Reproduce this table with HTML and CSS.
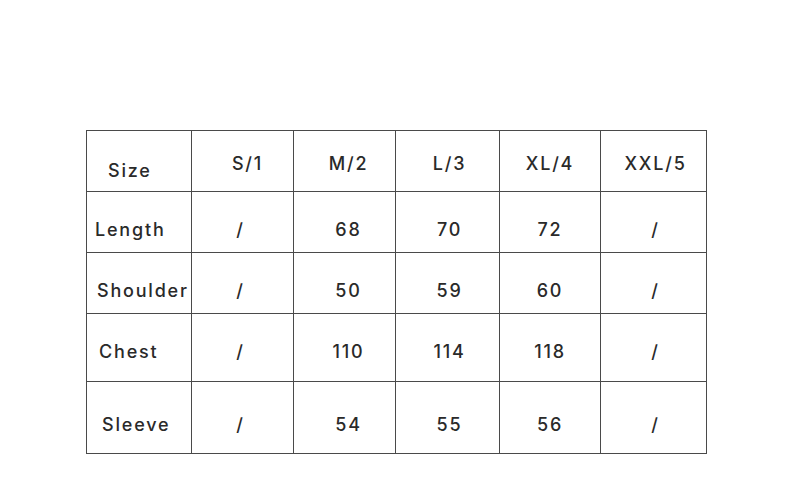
FILE: index.html
```html
<!DOCTYPE html>
<html>
<head>
<meta charset="utf-8">
<link rel="stylesheet" href="styles.css">
</head>
<body>
<div class="page">
  <table class="sizes">
    <colgroup>
      <col class="c1"><col class="c2"><col class="c3"><col class="c4"><col class="c5"><col class="c6">
    </colgroup>
    <tr class="r-head">
      <td class="label label-size">Size</td><td class="up">S/1</td><td class="up">M/2</td><td class="up">L/3</td><td class="up">XL/4</td><td class="up">XXL/5</td>
    </tr>
    <tr class="r-len">
      <td class="label">Length</td><td>/</td><td>68</td><td>70</td><td>72</td><td>/</td>
    </tr>
    <tr class="r-sh">
      <td class="label label-sh">Shoulder</td><td>/</td><td>50</td><td>59</td><td>60</td><td>/</td>
    </tr>
    <tr class="r-ch">
      <td class="label label-ch">Chest</td><td>/</td><td>110</td><td>114</td><td>118</td><td>/</td>
    </tr>
    <tr class="r-sl">
      <td class="label label-sl">Sleeve</td><td>/</td><td>54</td><td>55</td><td>56</td><td>/</td>
    </tr>
  </table>
</div>
</body>
</html>
```

FILE: styles.css
```css
html, body {
  margin: 0;
  padding: 0;
  background: #ffffff;
}
.page {
  width: 790px;
  height: 478px;
  padding: 130px 0 0 86px;
  box-sizing: border-box;
}
.sizes {
  border-collapse: collapse;
  table-layout: fixed;
  width: 621px;
  font-family: Inter, "Liberation Sans", Arial, sans-serif;
  font-weight: 500;
  font-size: 18px;
  letter-spacing: 1.8px;
  color: #2a2a2a;
}
.c1 { width: 105px; }
.c2 { width: 102px; }
.c3 { width: 102px; }
.c4 { width: 104px; }
.c5 { width: 101px; }
.c6 { width: 106px; }
.sizes td {
  border: 1px solid #4a4a4a;
  text-align: center;
  vertical-align: middle;
  padding: 14px 0 0 0;
  white-space: nowrap;
  overflow: visible;
}
.sizes td:nth-child(2) { padding-right: 4px; }
.sizes td:nth-child(3) { padding-left: 8px; }
.sizes td:nth-child(4) { padding-left: 4px; }
.sizes td:nth-child(6) { padding-left: 4px; }
.sizes td.up {
  padding-top: 4px;
}
.sizes td.up:nth-child(2) { padding-right: 0; padding-left: 10px; }
.r-head { height: 61px; }
.r-len { height: 61px; }
.r-sh { height: 61px; }
.r-ch { height: 68px; }
.r-sl { height: 72px; }
.r-ch td { padding-top: 8px; }
.sizes td.label {
  text-align: left;
  padding-left: 8px;
}
.sizes td.label-size { padding-left: 21px; padding-top: 18px; }
.sizes td.label-sh { padding-left: 10px; }
.sizes td.label-ch { padding-left: 12px; }
.sizes td.label-sl { padding-left: 15px; }
```
